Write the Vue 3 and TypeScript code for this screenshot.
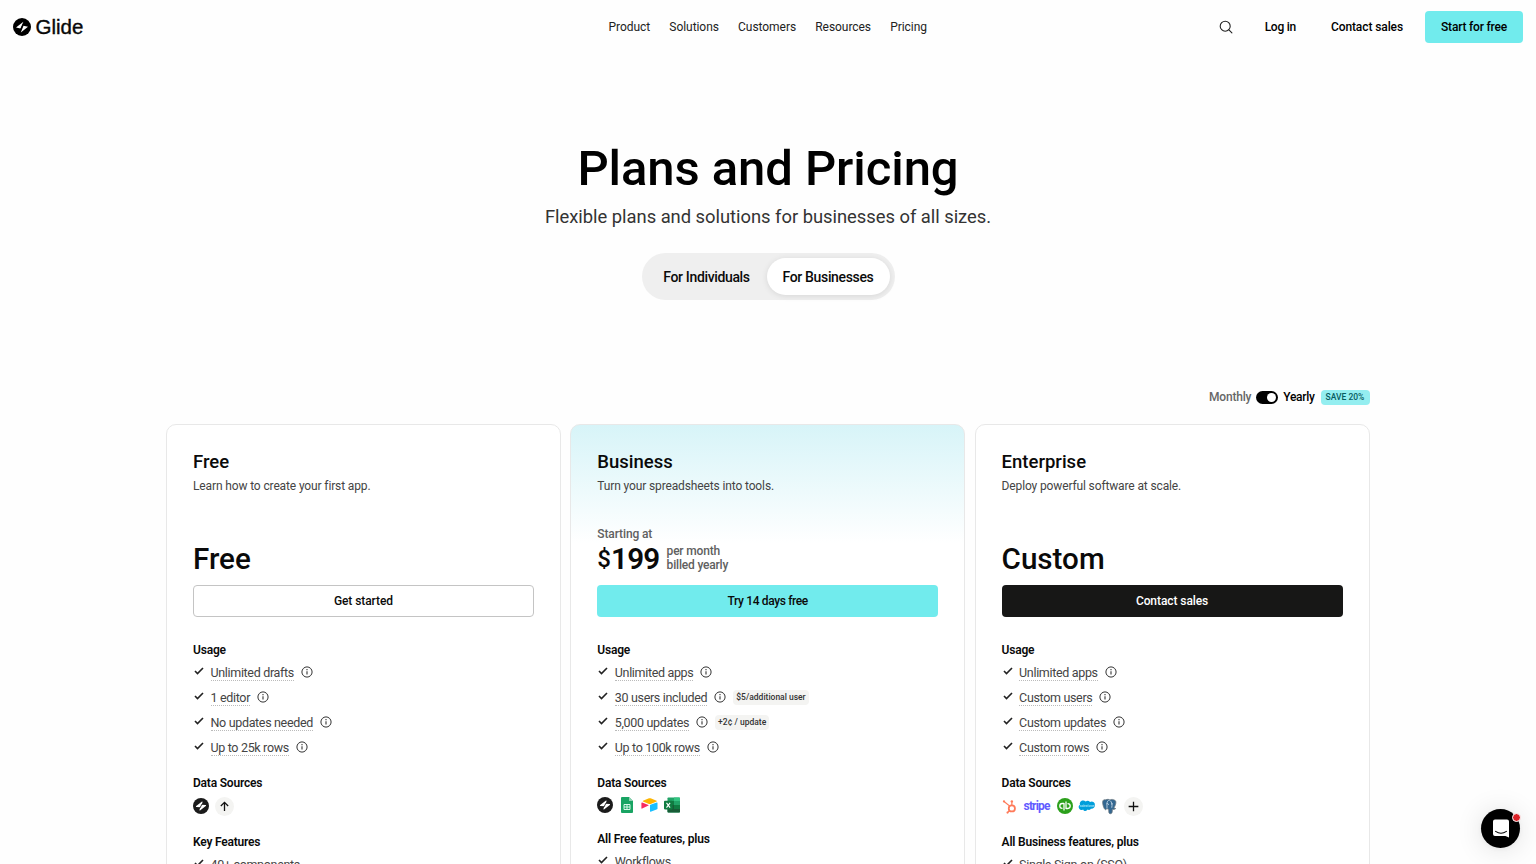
<script setup lang="ts">
interface Usage { label: string; badge?: string }
interface Plan {
  id: string
  name: string
  blurb: string
  price: string
  starting?: string
  cta: string
  usage: Usage[]
  sources: string[]
  featuresTitle: string
  feature: string
}

const navLinks: string[] = ['Product', 'Solutions', 'Customers', 'Resources', 'Pricing']

const plans: Plan[] = [
  {
    id: 'free', name: 'Free', blurb: 'Learn how to create your first app.', price: 'Free', cta: 'Get started',
    usage: [{ label: 'Unlimited drafts' }, { label: '1 editor' }, { label: 'No updates needed' }, { label: 'Up to 25k rows' }],
    sources: ['glide', 'arrow'], featuresTitle: 'Key Features', feature: '40+ components',
  },
  {
    id: 'business', name: 'Business', blurb: 'Turn your spreadsheets into tools.', price: '199', starting: 'Starting at', cta: 'Try 14 days free',
    usage: [
      { label: 'Unlimited apps' },
      { label: '30 users included', badge: '$5/additional user' },
      { label: '5,000 updates', badge: '+2¢ / update' },
      { label: 'Up to 100k rows' },
    ],
    sources: ['glide', 'sheets', 'airtable', 'excel'], featuresTitle: 'All Free features, plus', feature: 'Workflows',
  },
  {
    id: 'enterprise', name: 'Enterprise', blurb: 'Deploy powerful software at scale.', price: 'Custom', cta: 'Contact sales',
    usage: [{ label: 'Unlimited apps' }, { label: 'Custom users' }, { label: 'Custom updates' }, { label: 'Custom rows' }],
    sources: ['hubspot', 'stripe', 'quickbooks', 'salesforce', 'postgres', 'plus'],
    featuresTitle: 'All Business features, plus', feature: 'Single Sign-on (SSO)',
  },
]
</script>

<template>
  <div class="page">
    <header class="header">
      <a class="logo">
        <svg class="logo-mark" viewBox="0 0 18 18">
          <circle cx="9" cy="9" r="9" fill="#000" />
          <path d="M10.4 3.8 3 9.4l4.4 1zM7.8 14.6l7.2-5.9-4.5-1z" fill="#fff" />
          <path d="M10.5 5.5 7.4 12" stroke="#000" stroke-width=".7" />
        </svg>
        <span class="logo-word">Glide</span>
      </a>
      <nav class="nav">
        <a v-for="link in navLinks" :key="link">{{ link }}</a>
      </nav>
      <div class="actions">
        <svg class="search" viewBox="0 0 14 14" fill="none" stroke="#222" stroke-width="1.1" stroke-linecap="round">
          <circle cx="6.2" cy="6.2" r="5" /><path d="m9.9 9.9 3 3" />
        </svg>
        <a class="login">Log in</a>
        <a class="contact">Contact sales</a>
        <a class="start">Start for free</a>
      </div>
    </header>

    <section class="hero">
      <h1>Plans and Pricing</h1>
      <p>Flexible plans and solutions for businesses of all sizes.</p>
      <div class="audience">
        <button>For Individuals</button>
        <button class="active">For Businesses</button>
      </div>
    </section>

    <main class="plans">
      <div class="billing">
        <span class="monthly">Monthly</span>
        <span class="switch"><i></i></span>
        <span class="yearly">Yearly</span>
        <span class="save">SAVE 20%</span>
      </div>
      <div class="cards">
        <article v-for="plan in plans" :key="plan.id" class="card" :class="plan.id">
          <h2>{{ plan.name }}</h2>
          <p class="blurb">{{ plan.blurb }}</p>
          <div class="starting">{{ plan.starting }}</div>
          <div v-if="plan.starting" class="price amount">
            <span class="dollar">$</span><span class="number">{{ plan.price }}</span>
            <span class="period">per month<br />billed yearly</span>
          </div>
          <div v-else class="price">{{ plan.price }}</div>
          <button class="cta">{{ plan.cta }}</button>

          <h3>Usage</h3>
          <ul>
            <li v-for="item in plan.usage" :key="item.label">
              <svg class="check" viewBox="0 0 10 8"><path d="m1 4 2.5 2.6L9 1" fill="none" stroke="#222" stroke-width="1.6" /></svg>
              <span class="label">{{ item.label }}</span>
              <svg class="info" viewBox="0 0 12 12" fill="none" stroke="#333">
                <circle cx="6" cy="6" r="5.1" stroke-width="1" /><path d="M6 5.2v3.4M6 3.1v1.1" stroke-width="1.1" />
              </svg>
              <span v-if="item.badge" class="badge">{{ item.badge }}</span>
            </li>
          </ul>

          <h3 class="sources-title">Data Sources</h3>
          <div class="sources">
            <template v-for="source in plan.sources" :key="source">
              <svg v-if="source === 'glide'" class="icon glide" viewBox="0 0 16 16">
                <circle cx="8" cy="8" r="8" fill="#1b1b1b" />
                <path d="M9 3.5 3.2 8.1c-.5.5-.2 1 .4 1l3.4.2c.8 0 1.1-.4 1.3-1l1.2-4.1c.2-.7-.1-1-.5-.7zM7 12.5l5.8-4.6c.5-.5.2-1-.4-1L9 6.7c-.8 0-1.1.4-1.3 1l-1.2 4.1c-.2.7.1 1 .5.7z" fill="#fff" />
                <path d="M9.1 5.9 6.9 10.1" stroke="#1b1b1b" stroke-width=".9" />
              </svg>
              <span v-else-if="source === 'arrow'" class="round">
                <svg viewBox="0 0 12 12" fill="none" stroke="#111" stroke-width="1.4"><path d="M6 11V1.5M2 5.5l4-4 4 4" /></svg>
              </span>
              <svg v-else-if="source === 'sheets'" class="icon sheets" viewBox="0 0 12 16">
                <path d="M1 0h7l4 4v11a1 1 0 0 1-1 1H1a1 1 0 0 1-1-1V1a1 1 0 0 1 1-1z" fill="#19a463" />
                <path d="M8 0v4h4z" fill="#8ed1b1" />
                <path d="M3 7.5h6v5H3zM3 10h6M6 7.5v5" fill="none" stroke="#e9fff4" stroke-width=".9" />
              </svg>
              <svg v-else-if="source === 'airtable'" class="icon airtable" viewBox="0 0 17 14">
                <path d="m8 .3-6 2.5c-.4.2-.4.6 0 .8l6 2.3c.6.2 1 .2 1.6 0l6-2.3c.4-.2.4-.6 0-.8L9.6.3C9 .1 8.6.1 8 .3z" fill="#fcb400" />
                <path d="M9 7.3v6c0 .4.3.6.7.4l6.4-2.5c.3-.1.4-.3.4-.6V4.9c0-.4-.3-.6-.7-.4L9.4 6.8c-.3.1-.4.3-.4.5z" fill="#18bfff" />
                <path d="M7.5 7.5 1.2 10.6c-.4.2-.8 0-.8-.4V5c0-.4.4-.7.8-.5l6.2 2.4c.4.1.4.4.1.6z" fill="#f82b60" />
              </svg>
              <svg v-else-if="source === 'excel'" class="icon excel" viewBox="0 0 16 16">
                <rect x="3.5" y=".5" width="12.5" height="15" rx=".8" fill="#21a366" />
                <path d="M4 4h6v8H4z" fill="#107c41" /><path d="M10 .5h5.2a.8.8 0 0 1 .8.8V4h-6z" fill="#33c481" /><path d="M3.5 8H16v6.7a.8.8 0 0 1-.8.8H4.3a.8.8 0 0 1-.8-.8z" fill="#185c37" />
                <path d="M10 8h6v4h-6z" fill="#107c41" />
                <rect y="3.8" width="8.6" height="8.6" rx=".8" fill="#107c41" />
                <path d="m2.5 5.8 3.6 4.8M6.1 5.8l-3.6 4.8" stroke="#fff" stroke-width="1.1" />
              </svg>
              <svg v-else-if="source === 'hubspot'" class="icon hubspot" viewBox="0 0 15 16" fill="none" stroke="#ff7a59">
                <circle cx="10" cy="10" r="3.3" stroke-width="1.9" />
                <path d="M10 6.6V3.4M7.8 7.6 2 3M7.8 12.2l-2.2 2" stroke-width="1.3" />
                <circle cx="1.6" cy="2.6" r="1.2" fill="#ff7a59" stroke="none" /><circle cx="10" cy="2.6" r="1.3" fill="#ff7a59" stroke="none" /><circle cx="5.4" cy="14.4" r="1.2" fill="#ff7a59" stroke="none" />
              </svg>
              <span v-else-if="source === 'stripe'" class="stripe">stripe</span>
              <svg v-else-if="source === 'quickbooks'" class="icon qb" viewBox="0 0 16 16" fill="none" stroke="#fff" stroke-width="1.3">
                <circle cx="8" cy="8" r="8" fill="#2ca01c" stroke="none" />
                <path d="M7 5.5H5.2a2.4 2.4 0 0 0 0 4.8h.3M7 5v7.5M9 10.5h1.8a2.4 2.4 0 0 0 0-4.8h-.3M9 11V3.5" />
              </svg>
              <svg v-else-if="source === 'salesforce'" class="icon salesforce" viewBox="0 0 16 12">
                <path d="M6.7 1.5A3 3 0 0 1 11 2.1a3.2 3.2 0 0 1 4.9 3.1c0 2.4-2 3.9-4 3.5-.7 1.2-2.1 1.5-3.3.9-.8 1.9-3.7 2-4.5-.2A2.7 2.7 0 0 1 1 4.8C-.1 1.8 3.7-1 6.7 1.5z" fill="#009edb" />
                <text x="8" y="6.7" text-anchor="middle" fill="#d8f4ff" font-size="3.2" font-style="italic">salesforce</text>
              </svg>
              <svg v-else-if="source === 'postgres'" class="icon postgres" viewBox="0 0 16 16">
                <path d="M4 .9C1-.1 0 2.5 1 6.2c.8 3.3 2 5.8 3.3 5.1L5.4 10c.5.7.9.9 1.7.8l.2 3.5c.3 2 3.3 1.8 3.5-.2l.3-3.1c1.3.4 2.5 0 3.5-.8l-2-.5c1.8-2.8 3.3-7.1 1.1-8.3C12 .3 10.2.2 8.7.9 7.1.2 5.4.2 4 .9z" fill="#336791" stroke="#68747c" stroke-width=".8" />
                <path d="M5.3 10V5.4c0-2.6.8-4 3.4-4.5M9 2c1.2 1.3 2.2 3.6 1.4 7.3M4.8 5.2c1-.6 2.3-.4 2.2 1M9.6 5.5c.8-.7 1.5-.6 2 0" fill="none" stroke="#d9e8f3" stroke-width=".8" />
              </svg>
              <span v-else class="round">
                <svg viewBox="0 0 12 12" stroke="#111" stroke-width="1.4"><path d="M6 .7v10.6M.7 6h10.6" /></svg>
              </span>
            </template>
          </div>

          <h3 class="features-title">{{ plan.featuresTitle }}</h3>
          <ul class="features">
            <li>
              <svg class="check" viewBox="0 0 10 8"><path d="m1 4 2.5 2.6L9 1" fill="none" stroke="#222" stroke-width="1.6" /></svg>
              <span class="label">{{ plan.feature }}</span>
            </li>
          </ul>
        </article>
      </div>
    </main>

    <button class="chat" aria-label="Chat">
      <svg viewBox="0 0 16 19">
        <path d="M2 .5h12a2 2 0 0 1 2 2v16L12.4 17H2a2 2 0 0 1-2-2V2.5a2 2 0 0 1 2-2z" fill="#fff" />
        <path d="M2.6 12.4q5.4 3.7 10.8 0" fill="none" stroke="#000" stroke-width="1.1" stroke-linecap="round" />
      </svg>
      <i class="dot"></i>
    </button>
  </div>
</template>

<style>
body { background: #fff; }
</style>

<style scoped>
* { box-sizing: border-box; margin: 0; padding: 0; }
.page { width: 1536px; height: 864px; overflow: hidden; position: relative; background: #fefefe; color: #0a0a0a; font-family: Roboto, "Liberation Sans", sans-serif; font-size: 12px; }
svg { display: block; flex: none; overflow: visible; }
button { font: inherit; letter-spacing: inherit; border: 0; color: inherit; }

.header { display: grid; grid-template-columns: 1fr auto 1fr; align-items: center; height: 54px; padding: 0 13px 0 12.5px; }
.logo { display: flex; align-items: center; gap: 5px; }
.logo-mark { width: 18px; height: 18px; }
.logo-word { font: 20.5px/24px "Liberation Sans", sans-serif; -webkit-text-stroke: .35px #000; }
.nav { display: flex; gap: 19.2px; line-height: 18px; color: #222; letter-spacing: -.05px; }
.actions { display: flex; align-items: center; justify-content: flex-end; font-weight: 500; line-height: 18px; color: #000; letter-spacing: -.1px; }
.search { width: 14px; height: 14px; margin-right: 32px; }
.login { margin-right: 35px; letter-spacing: -.25px; }
.contact { margin-right: 22px; }
.start { width: 98px; height: 32px; line-height: 32px; text-align: center; background: #71ebed; border-radius: 4px; letter-spacing: -.2px; }

.hero { display: flex; flex-direction: column; align-items: center; padding-top: 85px; }
h1 { font-size: 49px; line-height: 60px; font-weight: 500; color: #000; letter-spacing: -.08px; }
.hero p { margin-top: 4px; font-size: 18.4px; line-height: 28px; color: #333; letter-spacing: -.03px; }
.audience { display: flex; width: 253px; height: 47px; margin-top: 22px; padding: 5px; border-radius: 24px; background: #efefef; font-size: 14px; font-weight: 500; letter-spacing: -.35px; }
.audience button { flex: 1 1 0; background: transparent; border-radius: 19px; white-space: nowrap; }
.audience .active { flex: 0 0 123px; background: #fff; box-shadow: 0 1px 6px rgba(0, 0, 0, .1); }

.plans { width: 1203.5px; margin: 88px 0 0 166px; }
.billing { display: flex; justify-content: flex-end; align-items: center; height: 18px; font-weight: 500; letter-spacing: -.2px; }
.monthly { color: #666; }
.switch { width: 22px; height: 13px; margin: 0 5px; padding: 2px; border-radius: 7px; background: #000; display: flex; justify-content: flex-end; }
.switch i { width: 9px; height: 9px; border-radius: 50%; background: #fff; }
.yearly { color: #000; letter-spacing: -.3px; }
.save { width: 49px; height: 15px; margin-left: 6px; line-height: 15px; text-align: center; border-radius: 4px; background: #94eef0; color: #075b60; font-size: 8.5px; letter-spacing: 0; }
.cards { display: grid; grid-template-columns: repeat(3, 1fr); gap: 9.4px; margin-top: 18px; }
.card { height: 700px; padding: 25px 26px; border: 1px solid #e8e8e8; border-radius: 10px; background: #fff; }
.business { background: linear-gradient(#d7f4f8, #fff 118px); }
h2 { font-size: 18.5px; line-height: 24px; font-weight: 500; color: #0a0a0a; }
.blurb { margin-top: 3px; line-height: 18px; color: #444; letter-spacing: -.13px; }
.starting { height: 16px; margin-top: 31px; line-height: 16px; font-weight: 500; color: #606060; letter-spacing: -.12px; }
.price { height: 34px; line-height: 35px; font-size: 29.6px; font-weight: 500; color: #0a0a0a; }
.amount { display: flex; align-items: center; }
.dollar { font-size: 24px; }
.number { font-weight: 600; letter-spacing: -.7px; }
.period { margin: -2px 0 0 7px; font-size: 12px; line-height: 14.5px; color: #606060; letter-spacing: -.18px; }
.cta { display: block; width: 100%; height: 32px; margin-top: 9px; border-radius: 4px; background: #fff; font-weight: 500; font-size: 12px; letter-spacing: -.08px; }
.free .cta { border: 1px solid #c4c4c4; }
.business .cta { background: #71ebed; letter-spacing: -.36px; }
.enterprise .cta { background: #171716; color: #fff; }
h3 { margin-top: 24px; font-size: 12px; line-height: 18px; font-weight: 600; color: #0a0a0a; letter-spacing: -.2px; }
ul { list-style: none; padding-top: .6px; }
li { display: flex; align-items: center; height: 25.1px; }
.check { width: 10px; height: 8px; margin: 0 6.5px 2.5px 1px; }
.label { font-size: 12.5px; line-height: 15px; color: #444; border-bottom: 1px dotted #bbb; margin-top: 1px; letter-spacing: -.33px; }
.info { width: 12px; height: 12px; margin: 0 7px .5px; }
.badge { height: 15px; padding: 0 3px; border-radius: 4px; background: #f4f4f2; font-size: 8.5px; line-height: 15px; font-weight: 500; color: #333; }
.sources-title { margin-top: 14.4px; }
.sources { display: flex; align-items: center; height: 20px; margin-top: 4px; }
.business .sources { height: 17px; }
.icon { height: 16px; }
.glide { width: 16px; margin-right: 6px; }
.round { width: 19px; height: 19px; border-radius: 50%; background: #f4f4f2; display: flex; align-items: center; justify-content: center; }
.round svg { width: 11px; height: 11px; }
.sheets { width: 12px; margin: 0 8px 0 2px; }
.airtable { width: 17px; height: 14px; margin-right: 6px; }
.excel { width: 16px; }
.hubspot { width: 15px; height: 15px; margin-right: 7px; }
.stripe { width: 26px; margin: -1px 7px 0 0; font-size: 12px; font-weight: 700; color: #635bff; letter-spacing: -.85px; }
.qb { width: 16px; margin-right: 6px; }
.salesforce { width: 16px; height: 12px; margin-right: 7px; }
.postgres { width: 15px; height: 15px; margin-right: 7px; }
.features-title { margin-top: 17px; }
.features { padding-top: 0; }
.features .label { border: 0; }

.chat { position: absolute; left: 1481px; top: 809px; width: 39px; height: 39px; border-radius: 50%; background: #000; display: flex; align-items: center; justify-content: center; box-shadow: 0 1px 5px rgba(0, 0, 0, .05), 0 2px 28px rgba(0, 0, 0, .12); }
.chat svg { width: 16px; height: 19px; }
.dot { position: absolute; right: -1px; top: 3.5px; width: 9px; height: 9px; border-radius: 50%; background: #dc2228; border: 1px solid #fff; }
</style>
